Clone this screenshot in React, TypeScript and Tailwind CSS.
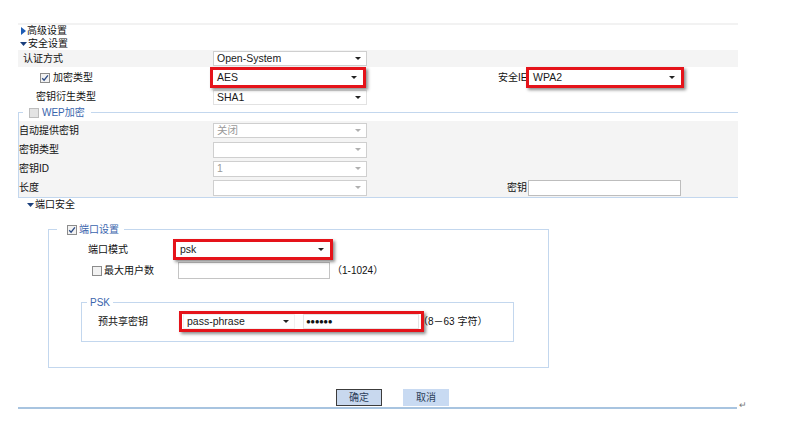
import React from 'react'

const RightTri = () => (
    <svg width="5" height="8" viewBox="0 0 5 8">
        <path d="M0 0L5 4L0 8Z" fill="#1d5cb4" />
    </svg>
)

const DownTri = () => (
    <svg width="7" height="4" viewBox="0 0 7 4">
        <path d="M0 0H7L3.5 4Z" fill="#1b3f7c" />
    </svg>
)

const Arrow = ({ color = '#222' }: { color?: string }) => (
    <svg width="6" height="3" viewBox="0 0 6 3">
        <path d="M0 0H6L3 3Z" fill={color} />
    </svg>
)

interface CheckProps {
    checked?: boolean;
    disabled?: boolean;
}
const Check = ({ checked, disabled }: CheckProps) => (
    <span className={`w-[10px] h-[10px] shrink-0 border flex items-center justify-center ${disabled ? 'border-[#bdbdbd] bg-[#e4e4e4]' : 'border-[#8c8c8c] bg-[#f2f2f2]'}`}>
        {checked && (
            <svg width="8" height="8" viewBox="0 0 8 8">
                <path d="M1.2 4.2L3.1 6.2L6.9 1.3" stroke="#2d4c86" strokeWidth="1.3" fill="none" />
            </svg>
        )}
    </span>
)

interface SelectProps {
    value?: string;
    className: string;
    disabled?: boolean;
}
const Select = ({ value = '', className, disabled }: SelectProps) => (
    <div className={`flex items-center justify-between border bg-white pl-[3px] pr-[5px] ${className}`}>
        <span className={`text-[10.5px] leading-none ${disabled ? 'text-[#9a9a9a]' : 'text-[#1a1a1a]'}`}>{value}</span>
        <Arrow color={disabled ? '#b0b0b0' : '#222'} />
    </div>
)

const RedBox = ({ children }: { children: React.ReactNode }) => (
    <div className="relative z-10 border-[3px] border-[#e5131a] bg-white shadow-[2px_2px_3px_rgba(0,0,0,0.45)]">
        {children}
    </div>
)

const Label = ({ children, className = '' }: { children: React.ReactNode; className?: string }) => (
    <span className={`text-[10px] leading-none text-[#111] whitespace-nowrap ${className}`}>{children}</span>
)

const App = () => {
    return (
        <div className="w-[796px] h-[428px] bg-white overflow-hidden font-['Liberation_Sans','Noto_Sans_CJK_SC',sans-serif]">
            <div className="pt-[23px] pl-[18px]">
                <div className="w-[720px]">
                    <div className="h-[2px] bg-[#f2f2f2]" />
                    <div className="h-[12px] flex items-center gap-[1px] pl-[3px]">
                        <RightTri />
                        <Label>高级设置</Label>
                    </div>
                    <div className="h-[13px] flex items-center gap-[1px] pl-[2px]">
                        <DownTri />
                        <Label>安全设置</Label>
                    </div>

                    <div className="h-[17px] bg-[#f4f4f4] flex items-center">
                        <Label className="w-[195px] pl-[5px]">认证方式</Label>
                        <Select value="Open-System" className="w-[154px] h-[15px] border-[#cfcfcf]" />
                    </div>
                    <div className="h-[21px] flex items-center">
                        <div className="w-[192px] pl-[22px] flex items-center gap-[3px]">
                            <Check checked />
                            <Label>加密类型</Label>
                        </div>
                        <RedBox>
                            <Select value="AES" className="w-[150px] h-[15px] border-white" />
                        </RedBox>
                        <Label className="ml-[132px] w-[28px]">安全IE</Label>
                        <RedBox>
                            <Select value="WPA2" className="w-[152px] h-[15px] border-white" />
                        </RedBox>
                    </div>
                    <div className="h-[18px] flex items-center">
                        <Label className="w-[195px] pl-[18px]">密钥衍生类型</Label>
                        <Select value="SHA1" className="w-[154px] h-[15px] border-[#e2e2e2]" />
                    </div>

                    <fieldset className="border-l border-t border-b border-[#c3d7ee]">
                        <legend className="ml-[4px] px-[6px] h-[13px] leading-none">
                            <span className="flex items-center gap-[3px] h-[13px]">
                                <Check disabled />
                                <span className="text-[10px] leading-none text-[#3a65ad]">WEP加密</span>
                            </span>
                        </legend>
                        <div className="mt-[2px] bg-[#f4f4f4]">
                            <div className="h-[19px] flex items-center">
                                <Label className="w-[194px]">自动提供密钥</Label>
                                <Select value="关闭" disabled className="w-[154px] h-[15px] border-[#cfcfcf]" />
                            </div>
                            <div className="h-[19px] flex items-center">
                                <Label className="w-[194px]">密钥类型</Label>
                                <Select disabled className="w-[154px] h-[16px] border-[#cfcfcf]" />
                            </div>
                            <div className="h-[19px] flex items-center">
                                <Label className="w-[194px]">密钥ID</Label>
                                <Select value="1" disabled className="w-[154px] h-[16px] border-[#cfcfcf]" />
                            </div>
                            <div className="h-[19px] flex items-center">
                                <Label className="w-[194px]">长度</Label>
                                <Select disabled className="w-[154px] h-[16px] border-[#cfcfcf]" />
                                <Label className="ml-[140px] w-[21px]">密钥</Label>
                                <div className="w-[153px] h-[16px] bg-white border border-[#bdbdbd]" />
                            </div>
                        </div>
                    </fieldset>

                    <div className="h-[14px] flex items-center gap-[1px] pl-[9px]">
                        <DownTri />
                        <Label>端口安全</Label>
                    </div>
                </div>

                <fieldset className="mt-[11px] ml-[30px] w-[501px] border border-[#c3d7ee] pb-[25px]">
                    <legend className="ml-[8px] pl-[10px] pr-[5px] h-[13px] leading-none">
                        <span className="flex items-center gap-[2px] h-[13px]">
                            <Check checked />
                            <span className="text-[10px] leading-none text-[#3a65ad]">端口设置</span>
                        </span>
                    </legend>
                    <div className="mt-[3px] h-[21px] flex items-center">
                        <Label className="w-[124px] pl-[39px]">端口模式</Label>
                        <RedBox>
                            <Select value="psk" className="w-[154px] h-[15px] border-white" />
                        </RedBox>
                    </div>
                    <div className="mt-[2px] h-[17px] flex items-center">
                        <div className="w-[129px] pl-[43px] flex items-center gap-[2px]">
                            <Check />
                            <Label>最大用户数</Label>
                        </div>
                        <div className="w-[152px] h-[17px] bg-white border border-[#c4c4c4]" />
                        <Label className="ml-[2px]">（1-1024）</Label>
                    </div>

                    <fieldset className="mt-[17px] ml-[32px] w-[433px] border border-[#c3d7ee] pb-[9px]">
                        <legend className="ml-[5px] px-[3px] h-[13px] leading-none">
                            <span className="flex items-center h-[13px] text-[10px] leading-none text-[#3a65ad]">PSK</span>
                        </legend>
                        <div className="mt-[2px] h-[21px] flex items-center">
                            <Label className="w-[97px] pl-[16px]">预共享密钥</Label>
                            <RedBox>
                                <div className="flex items-center gap-[8px] pl-[1px] pr-[2px]">
                                    <Select value="pass-phrase" className="w-[112px] h-[15px] border-[#f0f0f0]" />
                                    <div className="w-[116px] h-[15px] border border-[#e4e4e4] bg-white flex items-center pl-[2px]">
                                        <span className="text-[8px] leading-none tracking-[-0.5px] text-[#111]">●●●●●●</span>
                                    </div>
                                </div>
                            </RedBox>
                            <Label className="-ml-[6px]">（8－63 字符）</Label>
                        </div>
                    </fieldset>
                </fieldset>

                <div className="mt-[21px] ml-[318px] flex gap-[21px]">
                    <button className="w-[46px] h-[17px] border border-[#3c3c3c] bg-[#c8d8ee] text-[10px] leading-none text-[#2c3e5a]">
                        确定
                    </button>
                    <button className="w-[46px] h-[17px] bg-[#c8daf2] text-[10px] leading-none text-[#2c3e5a]">
                        取消
                    </button>
                </div>
                <div className="mt-[1px] flex items-start">
                    <div className="w-[719px] h-[2px] bg-[#a8c4e0]" />
                    <span className="ml-[2px] -mt-[6px] text-[9px] leading-none text-[#777]">↵</span>
                </div>
            </div>
        </div>
    )
}

export default App
